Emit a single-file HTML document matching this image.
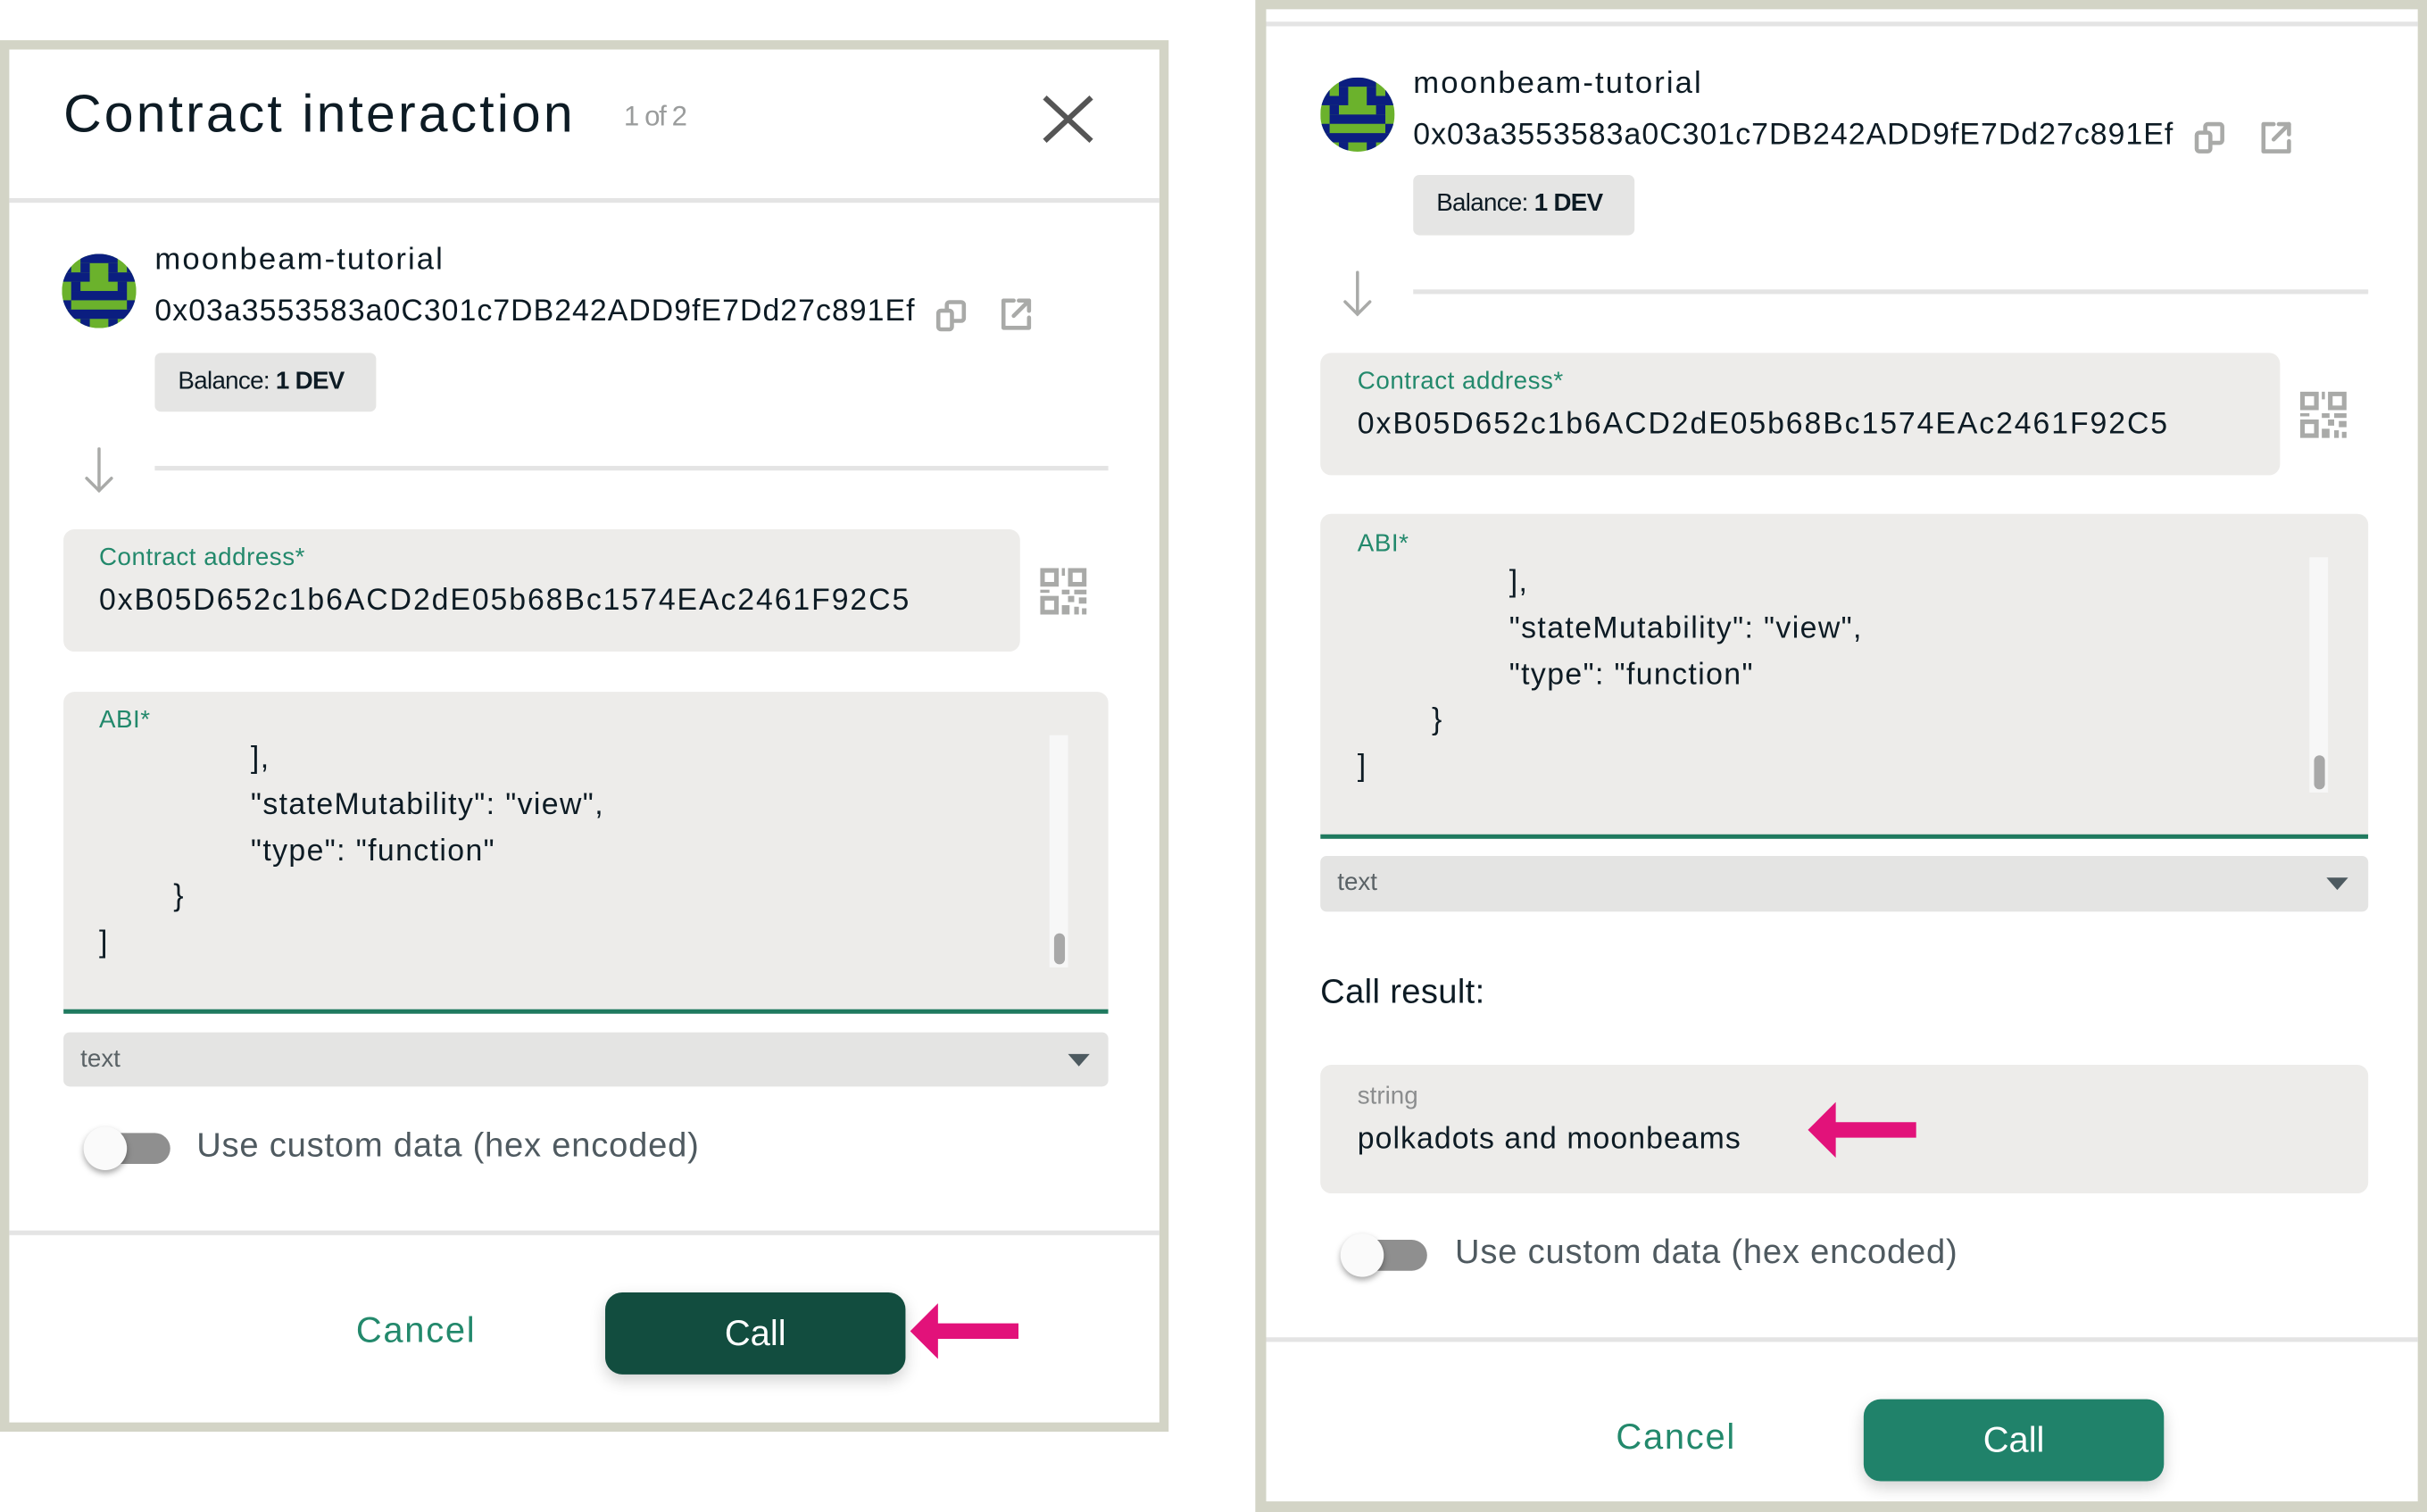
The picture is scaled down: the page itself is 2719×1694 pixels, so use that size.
<!DOCTYPE html>
<html><head><meta charset="utf-8"><style>
*{margin:0;padding:0;box-sizing:border-box}
html,body{width:2719px;height:1694px;overflow:hidden;background:#fff}
#s{position:absolute;left:0;top:0;width:1568px;height:977px;transform:scale(1.7341);transform-origin:0 0;font-family:"Liberation Sans",sans-serif;color:#0d1b24}
.a{position:absolute;white-space:nowrap}
.frame{position:absolute;background:#fff;border:6px solid #d3d4c6}
.sep{position:absolute;height:3px;background:#e4e4e4}
.box{position:absolute;background:#edecea;border-radius:7px}
.lbl{font-size:16px;color:#23896c;letter-spacing:0.3px}
.t20{font-size:19.5px;letter-spacing:0.8px}
.addr{font-size:19.5px;letter-spacing:0.6px}
.caddr{font-size:19.5px;letter-spacing:1.1px}
.nm{font-size:20px;letter-spacing:1.2px}
.chip{position:absolute;background:#e5e5e4;border-radius:4px;font-size:16px;letter-spacing:-0.4px;padding:0 0 0 15px;line-height:38px}
.sel{position:absolute;background:#e4e4e3;border-radius:4px;font-size:16px;color:#5a6266;padding-left:11px}
.tri{position:absolute;width:0;height:0;border-left:7px solid transparent;border-right:7px solid transparent;border-top:8px solid #4d5a60}
.track{position:absolute;width:54px;height:20px;border-radius:10px;background:#8f8f8f}
.knob{position:absolute;width:28px;height:28px;border-radius:50%;background:#fafafa;box-shadow:0 2px 4px rgba(0,0,0,.35)}
.tog{font-size:22px;color:#4f5a60;letter-spacing:0.45px}
.btn{position:absolute;border-radius:11px;color:#fff;font-size:23px;text-align:center;box-shadow:0 4px 10px rgba(0,0,0,.18)}
.cancel{font-size:23px;color:#23896c;letter-spacing:1px}
.sb{position:absolute;width:12px;background:#f7f7f7}
.th{position:absolute;left:3px;width:7px;border-radius:4px;background:#a8a8a8}
</style></head><body><div id="s">

<svg width="0" height="0" style="position:absolute"><defs>
<symbol id="av" viewBox="0 0 8 8"><clipPath id="cc"><circle cx="4" cy="4" r="4"/></clipPath><g clip-path="url(#cc)"><rect width="8" height="8" fill="#6bb22c"/><g fill="#0b1e80">
<rect x="2" y="0" width="4" height="1"/><rect x="2" y="1" width="1" height="1"/><rect x="5" y="1" width="1" height="1"/><rect x="0" y="1" width="1" height="1"/><rect x="7" y="1" width="1" height="1"/>
<rect x="0" y="2" width="3" height="1"/><rect x="5" y="2" width="3" height="1"/>
<rect x="1" y="3" width="1" height="1"/><rect x="6" y="3" width="1" height="1"/>
<rect x="1" y="4" width="6" height="1"/>
<rect x="0" y="5" width="1" height="1"/><rect x="7" y="5" width="1" height="1"/>
<rect x="0" y="6" width="8" height="1"/>
<rect x="2" y="7" width="1" height="1"/><rect x="5" y="7" width="1" height="1"/></g></g></symbol>
<symbol id="cp" viewBox="0 0 20 20"><g fill="none" stroke="#a9aaa8" stroke-width="2.4" stroke-linejoin="round"><rect x="2" y="7" width="8" height="11" rx="1.5"/><path d="M7 7V3.5A1.5 1.5 0 0 1 8.5 2h7A1.5 1.5 0 0 1 17 3.5v8a1.5 1.5 0 0 1-1.5 1.5H10"/></g></symbol>
<symbol id="ex" viewBox="0 0 20 20"><g fill="none" stroke="#a9aaa8" stroke-width="2.4" stroke-linecap="round" stroke-linejoin="round"><path d="M9 2H3v16h15v-6"/><path d="M12 2h6v6"/><path d="M18 2l-9 9"/></g></symbol>
<symbol id="qr" viewBox="0 0 30 30"><g fill="#a9aaa8"><path d="M0 0h12v12H0zM3 3v6h6V3z"/><path d="M18 0h12v12H18zM21 3v6h6V3z"/><path d="M0 18h12v12H0zM3 21v6h6v-6z"/><rect x="14" y="0" width="2" height="5"/><rect x="14" y="14" width="5" height="3"/><rect x="22" y="14" width="8" height="3"/><rect x="18" y="18" width="4" height="4"/><rect x="25" y="19" width="5" height="4"/><rect x="14" y="24" width="5" height="6"/><rect x="22" y="25" width="3" height="5"/><rect x="27" y="26" width="3" height="4"/><rect x="0" y="14" width="6" height="2"/></g></symbol>
<symbol id="dn" viewBox="0 0 24 30"><g fill="none" stroke="#a9aaa8" stroke-width="2" stroke-linecap="round"><path d="M12 1v27"/><path d="M4 20l8 8 8-8"/></g></symbol>
<symbol id="pk" viewBox="0 0 70 36"><path d="M0 18L18 0v13h52v10H18v13z" fill="#e2127a"/></symbol>
</defs></svg>

<!-- LEFT PANEL -->
<div class="frame" style="left:0;top:26px;width:755px;height:899px"></div>
<div class="a" style="left:41px;top:55px;font-size:34px;letter-spacing:1.8px">Contract interaction</div>
<div class="a" style="left:403px;top:65px;font-size:18px;color:#9a9c9c;letter-spacing:-0.8px">1 of 2</div>
<svg class="a" style="left:673px;top:61px" width="34" height="32"><path d="M2 2L32 30M32 2L2 30" stroke="#555" stroke-width="3.5"/></svg>
<div class="sep" style="left:6px;top:128px;width:743px"></div>

<svg class="a" style="left:40px;top:164px" width="48" height="48"><use href="#av"/></svg>
<div class="a nm" style="left:100px;top:157px">moonbeam-tutorial</div>
<div class="a addr" style="left:100px;top:190px">0x03a3553583a0C301c7DB242ADD9fE7Dd27c891Ef</div>
<svg class="a" style="left:604px;top:193px" width="22" height="22"><use href="#cp"/></svg>
<svg class="a" style="left:645px;top:192px" width="22" height="22"><use href="#ex"/></svg>
<div class="chip" style="left:100px;top:228px;width:143px;height:38px">Balance: <b>1 DEV</b></div>
<svg class="a" style="left:52px;top:289px" width="24" height="30"><use href="#dn"/></svg>
<div class="sep" style="left:100px;top:301px;width:616px"></div>

<div class="box" style="left:41px;top:342px;width:618px;height:79px"></div>
<div class="a lbl" style="left:64px;top:352px">Contract address*</div>
<div class="a caddr" style="left:64px;top:377px">0xB05D652c1b6ACD2dE05b68Bc1574EAc2461F92C5</div>
<svg class="a" style="left:672px;top:367px" width="30" height="30"><use href="#qr"/></svg>

<div class="box" style="left:41px;top:447px;width:675px;height:208px;border-radius:7px 7px 0 0;border-bottom:3px solid #1f7a5f"></div>
<div class="a lbl" style="left:64px;top:457px">ABI*</div>
<div class="a t20" style="left:162px;top:479px">],</div>
<div class="a t20" style="left:162px;top:509px">"stateMutability": "view",</div>
<div class="a t20" style="left:162px;top:539px">"type": "function"</div>
<div class="a t20" style="left:112px;top:568px">}</div>
<div class="a t20" style="left:64px;top:598px">]</div>
<div class="sb" style="left:678px;top:475px;height:150px"><div class="th" style="top:128px;height:20px"></div></div>

<div class="sel" style="left:41px;top:667px;width:675px;height:35px;line-height:35px">text</div>
<div class="tri" style="left:690px;top:681px"></div>

<div class="track" style="left:56px;top:732px"></div>
<div class="knob" style="left:54px;top:728px"></div>
<div class="a tog" style="left:127px;top:727px">Use custom data (hex encoded)</div>

<div class="sep" style="left:6px;top:795px;width:743px"></div>
<div class="a cancel" style="left:230px;top:846px">Cancel</div>
<div class="btn" style="left:391px;top:835px;width:194px;height:53px;line-height:53px;background:#124d3f">Call</div>
<svg class="a" style="left:588px;top:842px" width="70" height="36"><use href="#pk"/></svg>

<!-- RIGHT PANEL -->
<div class="frame" style="left:811px;top:0;width:757px;height:977px;border-width:6px 6px 7px 7px"></div>
<div class="sep" style="left:818px;top:14px;width:744px"></div>

<svg class="a" style="left:853px;top:50px" width="48" height="48"><use href="#av"/></svg>
<div class="a nm" style="left:913px;top:43px">moonbeam-tutorial</div>
<div class="a addr" style="left:913px;top:76px">0x03a3553583a0C301c7DB242ADD9fE7Dd27c891Ef</div>
<svg class="a" style="left:1417px;top:78px" width="22" height="22"><use href="#cp"/></svg>
<svg class="a" style="left:1459px;top:78px" width="22" height="22"><use href="#ex"/></svg>
<div class="chip" style="left:913px;top:113px;width:143px;height:39px">Balance: <b>1 DEV</b></div>
<svg class="a" style="left:865px;top:175px" width="24" height="30"><use href="#dn"/></svg>
<div class="sep" style="left:913px;top:187px;width:617px"></div>

<div class="box" style="left:853px;top:228px;width:620px;height:79px"></div>
<div class="a lbl" style="left:877px;top:238px">Contract address*</div>
<div class="a caddr" style="left:877px;top:263px">0xB05D652c1b6ACD2dE05b68Bc1574EAc2461F92C5</div>
<svg class="a" style="left:1486px;top:253px" width="30" height="30"><use href="#qr"/></svg>

<div class="box" style="left:853px;top:332px;width:677px;height:210px;border-radius:7px 7px 0 0;border-bottom:3px solid #1f7a5f"></div>
<div class="a lbl" style="left:877px;top:343px">ABI*</div>
<div class="a t20" style="left:975px;top:365px">],</div>
<div class="a t20" style="left:975px;top:395px">"stateMutability": "view",</div>
<div class="a t20" style="left:975px;top:425px">"type": "function"</div>
<div class="a t20" style="left:925px;top:454px">}</div>
<div class="a t20" style="left:877px;top:484px">]</div>
<div class="sb" style="left:1492px;top:360px;height:152px"><div class="th" style="top:128px;height:22px"></div></div>

<div class="sel" style="left:853px;top:553px;width:677px;height:36px;line-height:36px">text</div>
<div class="tri" style="left:1503px;top:567px"></div>

<div class="a" style="left:853px;top:628px;font-size:22px;letter-spacing:0.2px">Call result:</div>
<div class="box" style="left:853px;top:688px;width:677px;height:83px"></div>
<div class="a" style="left:877px;top:700px;font-size:16px;color:#8b8d8e">string</div>
<div class="a" style="left:877px;top:725px;font-size:19.5px;letter-spacing:0.6px">polkadots and moonbeams</div>
<svg class="a" style="left:1168px;top:712px" width="70" height="36"><use href="#pk"/></svg>

<div class="track" style="left:868px;top:801px"></div>
<div class="knob" style="left:866px;top:797px"></div>
<div class="a tog" style="left:940px;top:796px">Use custom data (hex encoded)</div>

<div class="sep" style="left:818px;top:864px;width:744px"></div>
<div class="a cancel" style="left:1044px;top:915px">Cancel</div>
<div class="btn" style="left:1204px;top:904px;width:194px;height:53px;line-height:53px;background:#20826a">Call</div>

</div></body></html>
